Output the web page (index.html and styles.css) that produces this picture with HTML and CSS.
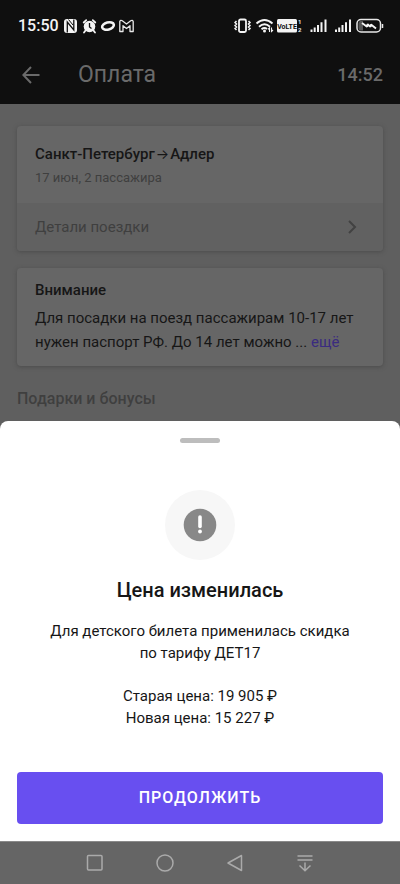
FILE: index.html
```html
<!DOCTYPE html>
<html lang="ru">
<head>
<meta charset="utf-8">
<meta name="viewport" content="width=device-width, initial-scale=1">
<title>Оплата</title>
<link rel="stylesheet" href="styles.css">
</head>
<body>
<header class="top">
  <div class="status">
    <span class="clock">15:50</span>
    <svg class="notices" width="72" height="16" viewBox="0 0 72 16" aria-hidden="true">
      <rect x="1" y="1" width="13" height="14" rx="3" fill="#f4f4f4"/>
      <path d="M4.300 14.500V4L10.800 12V1.500" fill="none" stroke="#0f0f0f" stroke-width="1.300"/>
      <path d="M5.500 1.500L10 7" stroke="#0f0f0f" stroke-width="1"/>
      <circle cx="26.500" cy="8.500" r="5.800" fill="#f4f4f4"/>
      <path d="M20.700 4.500L23.200 2.200M32.300 4.500L29.800 2.200M22.500 12.500L21 14.500M30.500 12.500L32 14.500" stroke="#f4f4f4" stroke-width="1.800" stroke-linecap="round"/>
      <path d="M26.500 5V9L28.500 10.500" fill="none" stroke="#0f0f0f" stroke-width="1.300"/>
      <ellipse cx="45" cy="8" rx="6" ry="3.500" transform="rotate(-14 45 8)" fill="none" stroke="#f4f4f4" stroke-width="2.600"/>
      <path d="M56.800 13.500V3.500Q57.500 1.800 59.300 2.800L63.500 6L67.700 2.800Q69.500 1.800 70.200 3.500V13.500H67V7.700L63.500 10.500L60 7.700V13.500Z" fill="none" stroke="#e8e8e8" stroke-width="1.300" stroke-linejoin="round"/>
    </svg>
    <svg class="signals" width="150" height="16" viewBox="0 0 150 16" aria-hidden="true">
      <g fill="none" stroke="#f4f4f4">
        <rect x="5" y="1.500" width="7" height="12.500" rx="1.500" stroke-width="1.800"/>
        <path d="M2.500 3L1 4.500L2.500 6L1 7.500L2.500 9L1 10.500L2.500 12M14.500 3L16 4.500L14.500 6L16 7.500L14.500 9L16 10.500L14.500 12" stroke-width="1.500"/>
        <path d="M22.500 5.500Q30.500 -1.500 38.500 5.500M25 8.700Q30.500 4 36 8.700M27.500 11.300Q30.500 9 33 11" stroke-width="1.900"/>
        <path d="M35.500 14V9.800L34 11.300M37.500 9.500V13.500L39 12" stroke-width="1.100"/>
      </g>
      <circle cx="30.500" cy="13" r="1.500" fill="#f4f4f4"/>
      <rect x="43" y="1" width="20" height="13.500" rx="1.500" fill="#f4f4f4"/>
      <text class="badge" x="53" y="10.500">VoLTE</text>
      <text class="sim" x="64" y="6">1</text>
      <text class="sim" x="64" y="14">2</text>
      <path d="M77.500 14V11.500M80.700 14V9.500M84 14V7M87.500 14V4.300M91.500 14V1.500M102 14V11.500M105.200 14V9.500M108.500 14V7M112 14V4.300M116 14V1.500" stroke="#f4f4f4" stroke-width="2"/>
      <rect x="123" y="1.500" width="23.500" height="12.500" rx="4" fill="none" stroke="#e8e8e8" stroke-width="1.500"/>
      <path d="M126 3H129V12.500H126Q124.500 12 124.500 10V5.500Q124.500 3.500 126 3Z" fill="#555"/>
      <path d="M128 5L133 8.800L133.500 6.200L136.500 8.800L137 6.500L142 10.500" fill="none" stroke="#f4f4f4" stroke-width="1.900" stroke-linejoin="bevel"/>
      <path d="M148.500 6V10" stroke="#e8e8e8" stroke-width="1.500"/>
    </svg>
  </div>
  <div class="appbar">
    <button class="back" type="button" aria-label="Назад">
      <svg width="18" height="18" viewBox="0 0 18 18" aria-hidden="true"><path d="M17.500 9H1.500M9 1L1.300 9L9 17" fill="none" stroke="#6a6a6a" stroke-width="2"/></svg>
    </button>
    <h1>Оплата</h1>
    <span class="timer">14:52</span>
  </div>
</header>
<main class="content">
  <section class="card">
    <div class="route">
      <h2>Санкт-Петербург<span class="arrow">→</span>Адлер</h2>
      <p>17 июн, 2 пассажира</p>
    </div>
    <button class="details" type="button">Детали поездки
      <svg width="9" height="14" viewBox="0 0 9 14" aria-hidden="true"><path d="M1 1L7 7L1 13" fill="none" stroke="#424242" stroke-width="2"/></svg>
    </button>
  </section>
  <section class="card notice">
    <h2>Внимание</h2>
    <p>Для посадки на поезд пассажирам 10-17 лет нужен паспорт РФ. До 14 лет можно ... <a href="#more">ещё</a></p>
  </section>
  <h2 class="bonus">Подарки и бонусы</h2>
</main>
<section class="sheet" role="dialog" aria-labelledby="sheet-title">
  <div class="handle"></div>
  <div class="sign">
    <svg width="34" height="34" viewBox="0 0 34 34" aria-hidden="true"><circle cx="17" cy="17" r="16.300" fill="#888"/><path d="M17 9V18.500" stroke="#fff" stroke-width="3.600" stroke-linecap="round"/><circle cx="17" cy="23.500" r="1.900" fill="#fff"/></svg>
  </div>
  <h2 id="sheet-title">Цена изменилась</h2>
  <p>Для детского билета применилась скидка<br>по тарифу ДЕТ17</p>
  <p>Старая цена: 19 905 ₽<br>Новая цена: 15 227 ₽</p>
  <button class="proceed" type="button">ПРОДОЛЖИТЬ</button>
</section>
<nav class="system">
  <button type="button" aria-label="Недавние"><svg width="18" height="18" viewBox="0 0 18 18"><rect x="1.500" y="1.500" width="14.500" height="14.500" rx="1"/></svg></button>
  <button type="button" aria-label="Домой"><svg width="18" height="18" viewBox="0 0 18 18"><circle cx="9" cy="9" r="8"/></svg></button>
  <button type="button" aria-label="Назад"><svg width="18" height="18" viewBox="0 0 18 18"><path d="M15.500 1.500V16.500L2 9Z" stroke-linejoin="round"/></svg></button>
  <button type="button" aria-label="Скрыть"><svg width="18" height="18" viewBox="0 0 18 18"><path d="M1.500 2H16.500M1.500 6H16.500M9 8.500V16.500M3.500 11.500L9 16.700L14.500 11.500"/></svg></button>
</nav>
</body>
</html>
```
FILE: styles.css
```css
* { box-sizing: border-box; }
body {
  margin: 0;
  min-height: 100vh;
  display: flex;
  flex-direction: column;
  background: #5f5f5f;
  color: #161616;
  font-family: Roboto, "Liberation Sans", sans-serif;
  font-size: 15px;
  line-height: 24px;
}
h1, h2, p { margin: 0; font-weight: 500; }
p { font-weight: 400; }
button { border: 0; padding: 0; background: none; font: inherit; color: inherit; }
svg { display: block; }

.top { background: #0f0f0f; }
.status { display: flex; align-items: center; height: 52px; padding: 0 16px 0 18px; }
.clock { color: #f4f4f4; font-size: 16px; font-weight: 500; }
.notices { margin-left: 4px; }
.signals { margin-left: auto; }
.badge { font: 700 7px Roboto, sans-serif; fill: #0f0f0f; text-anchor: middle; }
.sim { font: 700 6px Roboto, sans-serif; fill: #e8e8e8; }
.appbar { display: flex; align-items: center; height: 52px; padding: 0 17px 6px 22px; color: #6a6a6a; }
.back { width: 56px; }
h1 { font-size: 23px; font-weight: 400; line-height: 32px; }
.timer { margin-left: auto; font-size: 18px; font-weight: 500; }

.content { flex: 1; display: flex; flex-direction: column; gap: 17px; padding: 22px 17px 4px; }
.card { background: #666; border-radius: 4px; overflow: hidden; box-shadow: 0 1px 4px #4c4c4c; }
.card h2 { font-size: 15px; }
.route { padding: 16px 18px 13px; }
.route p { color: #3f3f3f; font-size: 13px; }
.arrow { padding: 0 1px; font-family: Inter, sans-serif; font-size: 14px; font-weight: 400; line-height: 1; }
.details { display: flex; align-items: center; justify-content: space-between; width: 100%; height: 48px; padding: 0 26px 0 18px; background: #616161; color: #3f3f3f; }
.notice { padding: 10px 18px 12px; }
.notice h2 { margin-bottom: 4px; }
a { color: #3a2b80; text-decoration: none; }
.bonus { font-size: 16px; color: #3f3f3f; line-height: 32px; }

.sheet { display: flex; flex-direction: column; align-items: center; padding: 17px; background: #fff; border-radius: 8px 8px 0 0; text-align: center; }
.handle { width: 40px; height: 5px; border-radius: 3px; background: #bdbdbd; }
.sign { display: grid; place-items: center; width: 70px; height: 70px; margin-top: 47px; border-radius: 50%; background: #f7f7f7; }
.sheet h2 { margin: 16px 0; font-size: 20px; line-height: 28px; }
.sheet p { margin-bottom: 21px; line-height: 22px; }
.proceed { width: 100%; height: 52px; margin-top: 22px; border-radius: 4px; background: #684ff0; color: #fff; font-size: 16px; font-weight: 500; letter-spacing: 1px; }

.system { display: flex; justify-content: center; gap: 52px; padding: 12px 0; border-top: 1px solid #8a8a8a; background: #656565; }
.system svg { fill: none; stroke: #aaa; stroke-width: 1.5; }
```
